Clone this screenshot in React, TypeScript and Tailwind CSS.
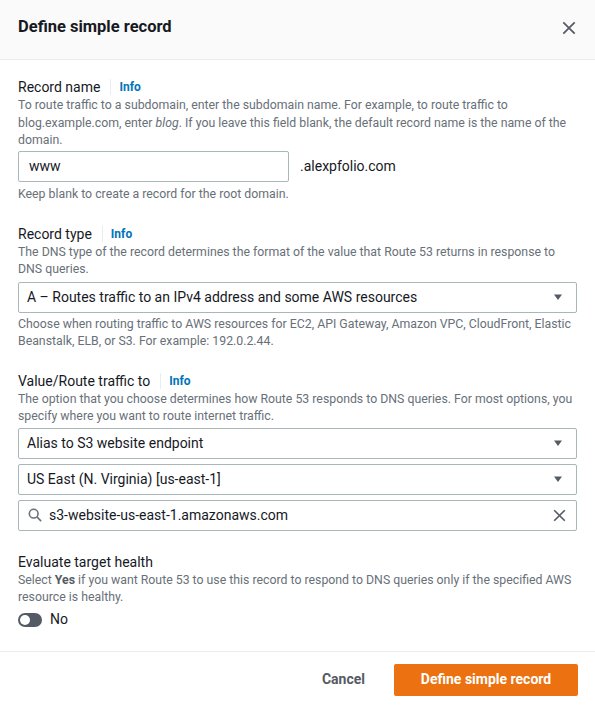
import React from 'react';

const Info = () => (
  <span className="ml-[10px] border-l border-[#eaeded] pl-[8px] text-[12px] font-bold leading-[16px] text-[#0073bb]">Info</span>
);

const Caret = () => (
  <svg width="12" height="12" viewBox="0 0 12 12" className="text-[#545b64]">
    <path d="M2 3.5h8L6 9z" fill="currentColor" />
  </svg>
);

const Select = ({ value }: { value: string }) => (
  <div className="flex h-[31px] items-center justify-between rounded-[2px] border border-[#aab7b8] bg-white pl-[8px] pr-[12px] text-[14px] text-[#16191f]">
    <span>{value}</span>
    <Caret />
  </div>
);

const Field = ({ label, info = true, desc, children }: { label: string; info?: boolean; desc: React.ReactNode; children: React.ReactNode }) => (
  <div>
    <div className="flex h-[18px] items-center text-[14px] leading-[18px] text-[#16191f]">
      {label}
      {info && <Info />}
    </div>
    <p className="pt-[1px] text-[12.3px] leading-[17.5px] text-[#687078]">{desc}</p>
    {children}
  </div>
);

export default function App() {
  return (
    <div className="h-[706px] w-[595px] overflow-hidden bg-white" style={{ fontFamily: 'Roboto, "Liberation Sans", sans-serif' }}>
      <div className="flex h-[60px] items-center justify-between border-b border-[#eaeded] bg-[#fafafa] px-[18px] pb-[4px]">
        <h1 className="text-[16.5px] font-bold text-[#16191f]">Define simple record</h1>
        <svg width="14" height="14" viewBox="0 0 16 16" className="mr-[1px] text-[#545b64]">
          <path d="M1.5 1.5l13 13M14.5 1.5l-13 13" stroke="currentColor" strokeWidth="2" />
        </svg>
      </div>

      <div className="flex flex-col gap-[22px] px-[18px] pt-[18px]">
        <Field
          label="Record name"
          desc={
            <>
              To route traffic to a subdomain, enter the subdomain name. For example, to route traffic to
              <br />
              blog.example.com, enter <i>blog</i>. If you leave this field blank, the default record name is the name of the
              <br />
              domain.
            </>
          }
        >
          <div className="mt-[1px] flex items-center">
            <div className="flex h-[31px] w-[271px] items-center rounded-[2px] border border-[#aab7b8] px-[10px] text-[14px] text-[#16191f]">www</div>
            <span className="ml-[11px] text-[14px] text-[#16191f]">.alexpfolio.com</span>
          </div>
          <p className="mt-[4px] text-[12.3px] leading-[17px] text-[#687078]">Keep blank to create a record for the root domain.</p>
        </Field>

        <Field
          label="Record type"
          desc={
            <>
              The DNS type of the record determines the format of the value that Route 53 returns in response to
              <br />
              DNS queries.
            </>
          }
        >
          <div className="mt-[3px]">
            <Select value="A – Routes traffic to an IPv4 address and some AWS resources" />
          </div>
          <p className="mt-[3px] text-[12.3px] leading-[17px] text-[#687078]">
            Choose when routing traffic to AWS resources for EC2, API Gateway, Amazon VPC, CloudFront, Elastic
            <br />
            Beanstalk, ELB, or S3. For example: 192.0.2.44.
          </p>
        </Field>

        <Field
          label="Value/Route traffic to"
          desc={
            <>
              The option that you choose determines how Route 53 responds to DNS queries. For most options, you
              <br />
              specify where you want to route internet traffic.
            </>
          }
        >
          <div className="mt-[2px] flex flex-col gap-[5px]">
            <Select value="Alias to S3 website endpoint" />
            <Select value="US East (N. Virginia) [us-east-1]" />
            <div className="flex h-[31px] items-center rounded-[2px] border border-[#aab7b8] pl-[9px] pr-[10px] text-[14px] text-[#16191f]">
              <svg width="14" height="14" viewBox="0 0 16 16" className="text-[#687078]">
                <circle cx="6.5" cy="6.5" r="5" fill="none" stroke="currentColor" strokeWidth="1.8" />
                <path d="M10.2 10.2L15 15" stroke="currentColor" strokeWidth="1.8" />
              </svg>
              <span className="ml-[7px] flex-1">s3-website-us-east-1.amazonaws.com</span>
              <svg width="13" height="13" viewBox="0 0 16 16" className="text-[#545b64]">
                <path d="M1.5 1.5l13 13M14.5 1.5l-13 13" stroke="currentColor" strokeWidth="2" />
              </svg>
            </div>
          </div>
        </Field>

        <Field
          label="Evaluate target health"
          info={false}
          desc={
            <>
              Select <b className="text-[#545b64]">Yes</b> if you want Route 53 to use this record to respond to DNS queries only if the specified AWS
              <br />
              resource is healthy.
            </>
          }
        >
          <div className="mt-[3px] flex h-[20px] items-center gap-[8px]">
            <div className="flex h-[14px] w-[24px] items-center rounded-full bg-[#545b64] pl-[2px]">
              <div className="h-[10px] w-[10px] rounded-full bg-white" />
            </div>
            <span className="text-[14px] text-[#16191f]">No</span>
          </div>
        </Field>
      </div>

      <div className="mt-[21px] flex items-center justify-end gap-[29px] border-t border-[#eaeded] px-[17px] pt-[12px]">
        <button className="text-[14px] font-bold text-[#545b64]">Cancel</button>
        <button className="h-[32px] w-[184px] rounded-[2px] bg-[#ec7211] text-[14px] font-bold text-white">Define simple record</button>
      </div>
    </div>
  );
}
